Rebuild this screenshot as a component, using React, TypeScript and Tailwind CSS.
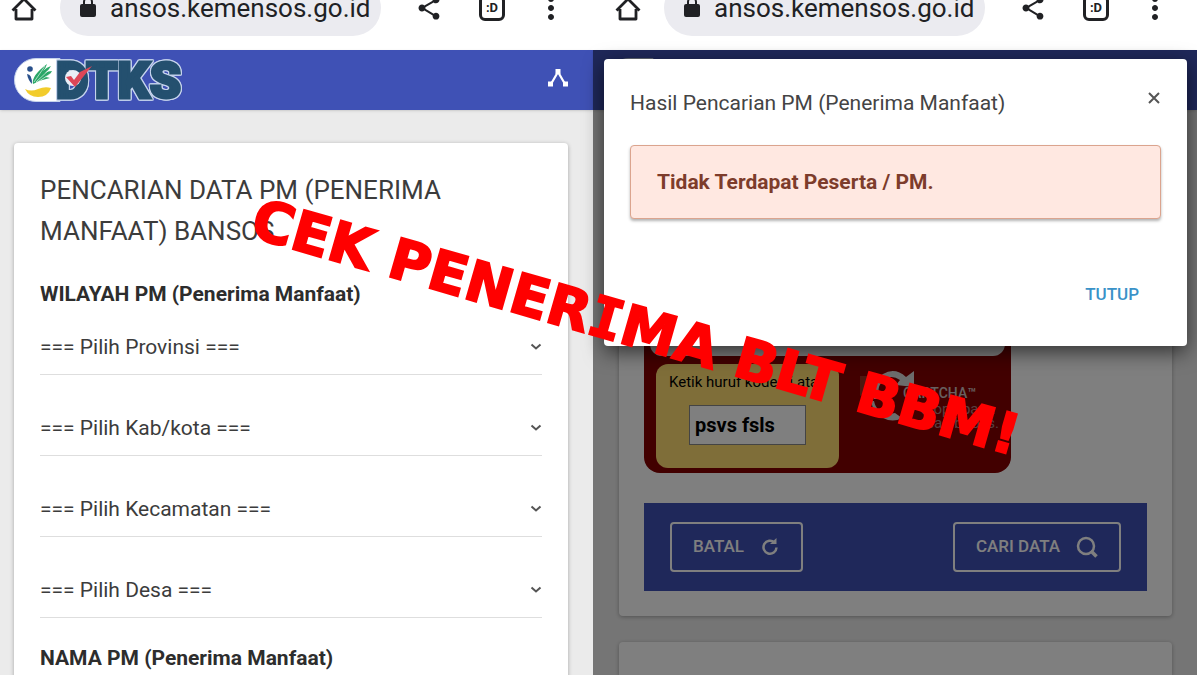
import { ReactNode } from "react";
import { MdMoreVert, MdShare } from "react-icons/md";

function BrowserBar() {
  return (
    <header className="h-[50px] shrink-0 overflow-hidden bg-white text-[#202124]">
      <div className="-mt-5 flex h-14 items-center pl-2">
        <button aria-label="Beranda" className="w-8">
          <svg viewBox="0 0 32 32" className="size-8" fill="none" stroke="currentColor" strokeWidth="2.800">
            <path d="M4.500 18.500L16 7L27.500 18.500M8 17V27H24V17" strokeLinejoin="round" />
          </svg>
        </button>
        <label className="ml-5 flex h-14 min-w-0 grow items-center gap-[14px] rounded-full bg-[#ebebf0] pl-5">
          <svg viewBox="0 0 16 24" className="h-6 w-4 shrink-0" aria-hidden="true">
            <path d="M4 9V6A4 4 0 0 1 12 6V9" fill="none" stroke="currentColor" strokeWidth="2" />
            <rect x="0" y="8" width="16" height="13" rx="2" fill="currentColor" />
          </svg>
          <input
            aria-label="Alamat situs"
            readOnly
            value="ansos.kemensos.go.id"
            className="w-full min-w-0 bg-transparent text-[26px] leading-8 outline-none"
          />
        </label>
        <button aria-label="Bagikan" className="ml-[34px] shrink-0">
          <MdShare className="size-7" />
        </button>
        <button
          aria-label="Tab"
          className="ml-9 flex size-[26px] shrink-0 items-center justify-center rounded-md border-[3px] border-current text-[13px] font-bold"
        >
          :D
        </button>
        <button aria-label="Menu" className="mr-6 ml-7 shrink-0">
          <MdMoreVert className="size-9" />
        </button>
      </div>
    </header>
  );
}

function Logo() {
  return (
    <svg viewBox="0 0 170 46" className="h-[46px] w-[170px] overflow-visible" role="img" aria-label="DTKS">
      <path d="M22 1.500H46V44.500H22A21.500 21.500 0 0 1 22 1.500Z" fill="#fff" stroke="#c5d3ec" />
      <path d="M11 32Q17 35 24 32T37 31Q34 40 24 40Q15 40 11 32Z" fill="#f2cc2c" />
      <path d="M19 27Q17 19 33 7Q32 11 29 14Q33 10 37 9Q35 13 31 16Q34 14 38 14Q36 18 31 20Q33 20 36 21Q26 23 19 27Z" fill="#2ba767" />
      <path d="M31 9L20 25M36 12L22 25M36 17L22 26" stroke="#fff" strokeWidth="0.600" />
      <circle cx="16" cy="12" r="2.800" fill="#29508b" />
      <path d="M13 17Q18 17 18 27Q14 23 13 17Z" fill="#29508b" />
      <g className="[filter:drop-shadow(1px_0_0_#c5d3ec)_drop-shadow(-1px_0_0_#c5d3ec)_drop-shadow(0_1px_0_#c5d3ec)_drop-shadow(0_-1px_0_#c5d3ec)]">
        <text x="42" y="41" fontSize="50" fontWeight="900" fill="#24506f" stroke="#24506f" strokeWidth="3" className="font-['Roboto']">
          DTKS
        </text>
      </g>
      <circle cx="59" cy="21" r="8" fill="#e9eef6" />
      <path d="M52 20L57 19L60 23L66 15L78 9L61 30Z" fill="#dd4657" />
    </svg>
  );
}

function AppBar() {
  return (
    <div className="flex h-[60px] shrink-0 items-center justify-between bg-[#3f51b5] pr-6 pl-[14px] shadow">
      <Logo />
      <button aria-label="Bagikan halaman" className="pb-1 text-white">
        <svg viewBox="0 0 22 20" className="h-5 w-[22px]" fill="currentColor">
          <path d="M4 16L11 4L18 16" fill="none" stroke="currentColor" strokeWidth="2.200" />
          <path d="M8.500 1H13.500V6H8.500ZM1 13.500H6V18.500H1ZM16 13.500H21V18.500H16Z" />
        </svg>
      </button>
    </div>
  );
}

function Card({ children, className = "" }: { children?: ReactNode; className?: string }) {
  return <section className={`rounded bg-white shadow-[0_1px_4px_rgba(0,0,0,0.3)] ${className}`}>{children}</section>;
}

function SelectField({ label, text }: { label: string; text: string }) {
  return (
    <div className="relative mb-[26px] border-b border-[#dedede]">
      <select aria-label={label} className="h-[54px] w-full appearance-none bg-transparent pt-0.5 text-[21px] text-[#3c3c3c] outline-none">
        <option>{text}</option>
      </select>
      <svg viewBox="0 0 12 8" className="pointer-events-none absolute top-[23px] right-0 h-2 w-3" fill="none" stroke="#555" strokeWidth="2">
        <path d="M1.500 1.500L6 5.500L10.500 1.500" />
      </svg>
    </div>
  );
}

const regions = [
  { label: "Provinsi", text: "=== Pilih Provinsi ===" },
  { label: "Kab/kota", text: "=== Pilih Kab/kota ===" },
  { label: "Kecamatan", text: "=== Pilih Kecamatan ===" },
  { label: "Desa", text: "=== Pilih Desa ===" },
];

function SearchScreen() {
  return (
    <div className="flex w-[49.54%] shrink-0 flex-col bg-[#ebebeb]">
      <BrowserBar />
      <AppBar />
      <main className="grow pt-[33px] pr-[25px] pl-[14px]">
        <Card className="px-[26px] pt-[27px] pb-6">
          <h1 className="text-[26px] leading-[41px] text-[#3c3c3c]">PENCARIAN DATA PM (PENERIMA MANFAAT) BANSOS</h1>
          <h2 className="mt-7 text-[21px] leading-7 font-bold text-[#2d2d2d]">WILAYAH PM (Penerima Manfaat)</h2>
          <div className="mt-3">
            {regions.map((r) => (
              <SelectField key={r.label} {...r} />
            ))}
          </div>
          <h2 className="text-[21px] leading-7 font-bold text-[#2d2d2d]">NAMA PM (Penerima Manfaat)</h2>
        </Card>
      </main>
    </div>
  );
}

function Captcha() {
  return (
    <div className="w-[367px] rounded-2xl bg-[#840000] px-1.5 pb-[5px]">
      <div className="h-[209px] rounded-b-xl bg-white" />
      <div className="mt-2 flex">
        <div className="ml-1.5 flex h-[104px] w-[183px] shrink-0 flex-col rounded-xl bg-[#ffdc73] pt-2 pl-[13px]">
          <label htmlFor="captcha" className="text-[15px] leading-5 whitespace-nowrap text-black">
            Ketik huruf kode di atas
          </label>
          <input
            id="captcha"
            defaultValue="psvs fsls"
            className="mt-[13px] ml-5 h-10 w-[117px] border border-[#888] bg-white px-[5px] text-xl font-bold text-black outline-none"
          />
        </div>
        <div className="flex pt-1 pl-5">
          <svg viewBox="0 0 56 56" className="size-14 shrink-0" fill="none" aria-hidden="true">
            <path d="M1 8H16V30L8 24L1 28Z" fill="#9c3020" />
            <path d="M15 31Q9 14 24 6Q36 -1 47 9L55 3V19L37 17L41 12Q31 5 23 14Q17 20 21 31Z" fill="#d8d8d8" />
            <path d="M15 33Q18 48 36 45L43 50Q34 55 24 50Q14 45 12 33Z" fill="#d8d8d8" />
          </svg>
          <div className="-ml-3 pt-[17px] whitespace-nowrap">
            <p className="text-sm leading-4 font-medium text-[#d0c0c0]">CAPTCHA™</p>
            <p className="pl-[18px] text-[15px] leading-4 text-[#b08080]">stop spam.</p>
            <p className="pl-[18px] text-[15px] leading-3 text-[#b08080]">read books.</p>
          </div>
        </div>
      </div>
    </div>
  );
}

function ResultDialog() {
  return (
    <div
      role="dialog"
      aria-labelledby="result-title"
      className="absolute top-[9px] right-[10px] left-[11px] rounded bg-white px-[26px] pt-6 pb-[34px] shadow-[0_6px_20px_rgba(0,0,0,0.6)]"
    >
      <div className="flex items-start justify-between">
        <h2 id="result-title" className="text-[21px] leading-10 text-[#444]">
          Hasil Pencarian PM (Penerima Manfaat)
        </h2>
        <button aria-label="Tutup dialog" className="mt-2 text-[#555]">
          <svg viewBox="0 0 14 14" className="size-[14px]" fill="none" stroke="currentColor" strokeWidth="2">
            <path d="M2 2L12 12M12 2L2 12" />
          </svg>
        </button>
      </div>
      <p className="mt-[22px] rounded border border-[#dba48e] bg-[#ffe8e1] px-[26px] py-[22px] text-[21px] leading-7 font-bold text-[#7d3c2b] shadow-[0_2px_3px_rgba(0,0,0,0.3)]">
        Tidak Terdapat Peserta / PM.
      </p>
      <div className="mt-[57px] flex justify-end pr-[22px]">
        <button className="text-[17px] leading-9 font-medium text-[#3a92c8]">TUTUP</button>
      </div>
    </div>
  );
}

function ResultScreen() {
  return (
    <div className="flex min-w-0 grow flex-col bg-[#ebebeb]">
      <div className="shrink-0 bg-white pl-[11px]">
        <BrowserBar />
      </div>
      <div className="relative grow">
        <AppBar />
        <main className="pr-[25px] pl-[26px]">
          <Card className="rounded-t-none px-[25px] pt-[37px] pb-[25px]">
            <Captcha />
            <div className="mt-[30px] flex items-center justify-between bg-[#3f51b5] px-[26px] py-[19px] text-[17px] font-medium text-white">
              <button className="flex h-[50px] items-center gap-4 rounded border-2 border-white px-[21px]">
                BATAL
                <svg viewBox="0 0 20 20" className="size-5" fill="none" stroke="currentColor" strokeWidth="2.500" aria-hidden="true">
                  <path d="M14.500 5.500A6.500 6.500 0 1 0 16.500 10.500" />
                  <path d="M10 7H16.500V1Z" fill="currentColor" stroke="none" />
                </svg>
              </button>
              <button className="flex h-[50px] items-center gap-4 rounded border-2 border-white px-[21px]">
                CARI DATA
                <svg viewBox="0 0 22 22" className="size-[22px]" fill="none" stroke="currentColor" strokeWidth="2.500" aria-hidden="true">
                  <circle cx="10" cy="10" r="8" />
                  <path d="M15 15L20.500 20.500" strokeWidth="3.500" />
                </svg>
              </button>
            </div>
          </Card>
          <Card className="mt-[26px] h-[33px] rounded-b-none" />
        </main>
        <div className="absolute inset-0 bg-black/50" />
        <ResultDialog />
      </div>
    </div>
  );
}

export default function App() {
  return (
    <div className="relative flex h-screen overflow-hidden font-['Roboto',sans-serif]">
      <SearchScreen />
      <ResultScreen />
      <p className="pointer-events-none absolute top-[189px] left-[246px] origin-bottom-left rotate-[16deg] text-[56px] leading-none font-bold whitespace-nowrap text-[#ff0000] font-['DejaVu_Sans',sans-serif] [-webkit-text-stroke:2px_#ff0000]">
        CEK PENER<span className="font-['DejaVu_Sans_Mono',monospace]">I</span>MA BLT BBM!
      </p>
    </div>
  );
}
